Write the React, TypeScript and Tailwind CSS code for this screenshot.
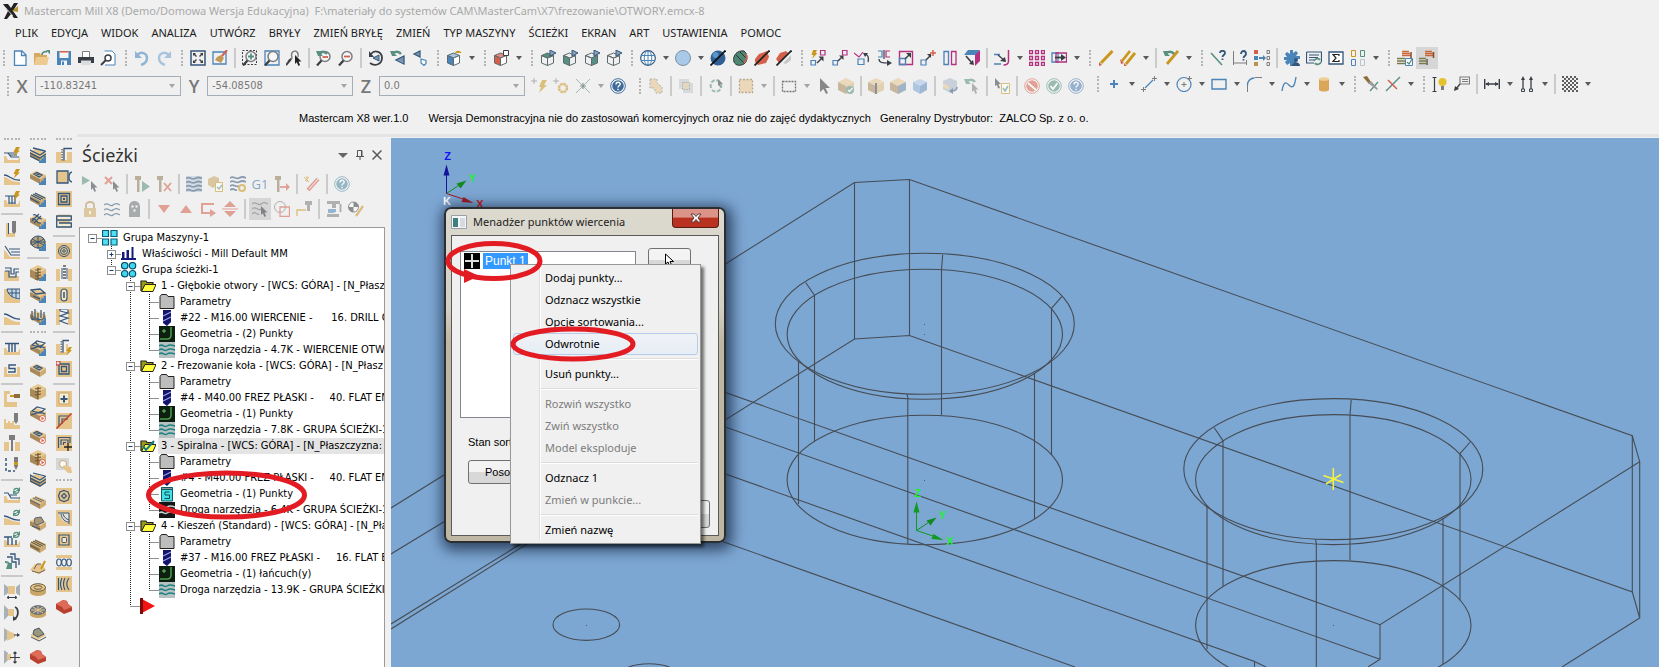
import React from "react";

interface stroke {
  d: string;
  c?: string;
  w?: number;
}

const TAN = "#e6c58d";
const NAVY = "#35567a";
const BLUE = "#4a84b8";
const GREEN = "#579080";
const RED = "#d4604a";
const PINK = "#b5307f";
const DARK = "#3a3f45";
const GRAY = "#7d7d7d";
const GOLD = "#c9971c";

// stroked path
const L = ({ d, c = DARK, w = 1 }: stroke) => (
  <path d={d} fill="none" stroke={c} strokeWidth={w} />
);

// filled path
const F = ({ d, c = DARK }: stroke) => <path d={d} fill={c} />;

/* ---------- shared icon parts ---------- */

const Cube = ({ t = "none", l = "none", r = "none", c = "#5d6a70" }) => (
  <g stroke={c} strokeWidth="1" strokeLinejoin="round">
    <path d="M1.500 5.500L7.500 3l6 2.500-6 2.500z" fill={t} />
    <path d="M1.500 5.500L7.500 8v7.500l-6-2.500z" fill={l} />
    <path d="M13.500 5.500L7.500 8v7.500l6-2.500z" fill={r} />
  </g>
);

const Lens = ({ c = GRAY }) => (
  <>
    <circle cx="9" cy="6.500" r="5" fill="#f4f8fb" stroke={c} strokeWidth="1.500" />
    <L d="M5.500 10.500L1 15.500" w={2.2} />
  </>
);

const Flag = () => (
  <>
    <F d="M10 0l6 3-6 3z" c="#8aa3ba" />
    <L d="M10 0l6 3-6 3z" c={NAVY} />
  </>
);

const BackArrow = () => (
  <>
    <F d="M0 1l6 0-2 2 3 3-5 0z" c={GREEN} />
    <L d="M2 4c3-3 7-3 9 0" c={GREEN} w={2.4} />
  </>
);

const Cursor = ({ x = 0, c = DARK }) => (
  <path
    d="M8 5l6.500 6.500H11.500l1.500 3.500-1.500 1-1.800-3.800L8 14z"
    transform={`translate(${x} 0)`}
    fill={c}
  />
);

const Bolt = () => <F d="M12 0h4l-2 3.500h2L9.500 9.500l2-4.500h-2z" c={GOLD} />;

const Refresh = () => (
  <>
    <L d="M9.500 3.500c1-2.500 4-2.500 5-1M15 4c-1 3-4 3-5 1.500" c={GREEN} w={1.3} />
    <F d="M16 0v4h-4zM9 7.500V4h4z" c={GREEN} />
  </>
);

const Play = () => (
  <>
    <circle cx="12.500" cy="12.500" r="3" fill="#fff" stroke={RED} />
    <F d="M11.500 10.700l3 1.800-3 1.800z" c={RED} />
  </>
);

const Steps = () => <F d="M16 9v7H9v-2.500h2.300v-2h2.400V9z" c={BLUE} />;

const Slab = () => (
  <>
    <F d="M0 5l6-3 10 4-6 4z" c="#e6c891" />
    <F d="M0 5l10 5v5L0 9.500z" c="#a98a5a" />
    <F d="M16 6l-6 4v5l6-4z" c="#cfac72" />
  </>
);

const Box = () => (
  <>
    <F d="M0 4l8-4 8 4-8 4z" c="#e6c891" />
    <F d="M0 4l8 4v8l-8-4z" c="#a98a5a" />
    <F d="M16 4L8 8v8l8-4z" c="#d9b67c" />
  </>
);

const Plate = () => <F d="M0 0h16v16H0z" c={TAN} />;

const Base = () => <F d="M0 9h2l2 4h10l2-4v7H0z" c={TAN} />;

const Help = ({ c = "#3f6c9b" }) => (
  <>
    <circle cx="8" cy="8" r="7.300" fill="#fff" stroke={c} />
    <circle cx="8" cy="8" r="5.800" fill={c} />
    <L d="M6 6.500c0-3 4.200-2.800 4.200-.3 0 1.600-2.200 1.600-2.200 3.300M8 10.800v1.500" c="#fff" w={1.4} />
  </>
);

const Ball = () => <circle cx="8" cy="8" r="7.500" fill="#a9c9e8" stroke="#7b8fa3" />;

/* ---------- icons, all on a 16 x 16 grid ---------- */

const icons: Record<string, React.ReactNode> = {
  new: <><F d="M2.500 .5h8l3.500 4v11H2.500z" c="#fff" /><L d="M2.500 1h7.500l4 4v10.500H2.500zM9.500 1v4.500H14" c={BLUE} w={1.3} /></>,
  open: <><F d="M0 3h6l1 2h6v10H0z" c="#d8a95c" /><F d="M2 7h13l-2 8H0z" c="#ecca90" /><L d="M8 5c0-3 3-4 5-3" c={GREEN} w={1.800} /><F d="M12 0h4v4.500z" c={GREEN} /></>,
  save: <><F d="M1 1h14v14H1z" c={BLUE} /><F d="M3.500 1h9v7h-9zM5 10.500h6V15H5z" c="#f4f4f4" /><F d="M3.500 1h9v1.500h-9z" c={RED} /><F d="M6 11.500h2V15H6z" c={BLUE} /></>,
  print: <><F d="M4 1h8v6H4z" c="#fff" /><L d="M4.500 7V1.500h7V7" c={GRAY} /><F d="M0 7h16v6H0z" /><F d="M3 10.500h10V15H3z" c="#d9dde0" /></>,
  preview: <><F d="M4 1h9l2 2v12H4z" c="#fff" /><L d="M4.500 1H12l3 3v11H5" c={BLUE} /><circle cx="8" cy="8" r="3" fill="#fff" stroke={DARK} strokeWidth="1.500" /><L d="M6 10l-5 5" w={2} /></>,
  undo: <><L d="M3 5c4-4 10-2 10 3 0 4-3 6-6 7" c="#8fb3d4" w={2.400} /><F d="M1 1v7h7z" c="#8fb3d4" /></>,
  redo: <><L d="M13 5C9 1 3 3 3 8c0 4 3 6 6 7" c="#a9c3dc" w={2.400} /><F d="M15 1v7H8z" c="#a9c3dc" /></>,
  fit: <><L d="M1 1h14v14H1z" c={NAVY} w={1.500} /><L d="M3.500 3.500l3 3M12.500 3.500l-3 3M3.500 12.500l3-3M12.500 12.500l-3-3" w={1.400} /><F d="M3 3h3L3 6zM13 3v3l-3-3zM3 13v-3l3 3zM13 13h-3l3-3z" /></>,
  repaint: <><L d="M1 2h13v12H1z" c={BLUE} w={1.300} /><F d="M5 7l4-2 3 3-3 5-6-3z" c="#c39a55" /><L d="M10 6l5-6" c={RED} w={2} /></>,
  zoomTarget: <><path d="M.5.500h14v14H.5z" fill="none" stroke={DARK} strokeDasharray="2 1.500" /><Lens /><L d="M9 3.500v6M6 6.500h6" c={GREEN} w={1.800} /></>,
  zoomWin: <><L d="M1 1h14v14H1z" c={BLUE} w={1.300} /><Lens /></>,
  zoomPtr: <><L d="M2 11L6 8c-3-9 8-9 6-1" c={GRAY} w={1.500} /><L d="M5 9l-5 6" w={2} /><Cursor x={1} c="#222" /></>,
  unzoom: <><Lens /><BackArrow /><L d="M6.500 7h5.500" c={RED} w={1.800} /></>,
  zoomOut: <><Lens /><L d="M6 6.500h6" c={RED} w={1.800} /></>,
  rotate: <><L d="M3 4c4-5 11-2 11 4 0 6-7 9-12 5" w={1.800} /><F d="M1 1v6h5z" /><F d="M11 5v6L5 8z" c="#7895b0" /><L d="M11 5v6L5 8z" c={NAVY} /></>,
  rotUndo: <><BackArrow /><F d="M14 6v7L6 9.500z" c="#7895b0" /><L d="M14 6v8L6 10z" c={NAVY} w={1.300} /></>,
  planes: <><F d="M8 1v6L2 4z" c="#7895b0" /><L d="M8 1v6L2 4z" c={NAVY} w={1.200} /><path d="M9 9l5 1.500v3L12 15.500 9 13z" fill="#fff" stroke={BLUE} strokeWidth="1.200" /></>,
  cubeBlue: <><Cube l={BLUE} t="#a9c6df" r="#fff" /><F d="M9 3c1-3 5-3 6.500 0z" c={GOLD} /></>,
  cubeRed: <><Cube l={RED} t="#e79080" r="#fff" /><path d="M10.500.5h5v5h-5z" fill="#fff" stroke={DARK} /></>,
  cubeTop: <><Cube t={GREEN} /><Flag /></>,
  cubeLeft: <><Cube l={GREEN} /><Flag /></>,
  cubeRight: <><Cube r={GREEN} /><Flag /></>,
  cubeWire: <><Cube /><Flag /></>,
  globe: <><circle cx="8" cy="8" r="7.300" fill="#fff" stroke={NAVY} strokeWidth="1.200" /><L d="M1 5.500h14M1 10.500h14M8 1v14" c={BLUE} /><ellipse cx="8" cy="8" rx="3.800" ry="7" fill="none" stroke={BLUE} /></>,
  sphere: <Ball />,
  sphereSlash: <><circle cx="8" cy="8" r="7.500" fill="#2f5f94" /><circle cx="5.500" cy="5" r="3" fill="#5b94c8" /><L d="M15.500 .5L.5 15.500" c="#111" w={1.800} /></>,
  sphereGreen: <><path d="M2 12C0 5 6 0 12 1c4 3 4 10 0 13-4 2-8 2-10-2z" fill="#4d8773" stroke="#333" /><L d="M4 5l8 8M8 2l6 6" c="#333" /><L d="M12 13c3-3 3-7 2-9" c={RED} w={1.500} /></>,
  redSlash: <><path d="M1 9l4-5 8-3 2 6-3 6-8 2-3-3z" fill={RED} /><L d="M15.500 .5L.5 15.500" c="#222" w={1.800} /></>,
  redSlash2: <><path d="M0 9l4-6 6-2 2 2-9 10z" fill={RED} /><F d="M7 13l8-8v5l-5 4z" c="#c6c9cc" /><L d="M15.500 .5L.5 15.500" c="#222" w={1.800} /></>,
  xfDynamic: <><F d="M3 0h4L5.500 3h2L2 9l1.500-4h-2z" c={GOLD} /><L d="M10.500.5h4.500v4.500h-4.500z" c={PINK} w={1.200} /><L d="M1 10.500h4.500V15H1z" c={BLUE} w={1.200} /><L d="M7 13l5-5" w={1.500} /><F d="M13.500 6.500v5l-5-5z" /></>,
  xfMove: <><L d="M10.500.5h4.500v4.500h-4.500z" c={PINK} w={1.200} /><L d="M1 10.500h4.500V15H1z" c={BLUE} w={1.200} /><L d="M6 11l4-4" w={1.500} /><F d="M11.500 5.500v4.500L7 5.500z" /></>,
  xfRotate: <><L d="M0 3l5 4 4-5" c={PINK} w={1.200} /><L d="M4 14.500V9h6v5.500z" c={BLUE} w={1.200} /><L d="M14 12c1-4 0-7-3-8" w={1.300} /><F d="M9 3h5l-3 4z" /></>,
  xfMirror: <><L d="M2 1h4v6H2" c={BLUE} w={1.200} /><L d="M14 1h-4v6h4" c={PINK} w={1.200} /><L d="M8 0v9M3 9c0 4 4 4 9 4" w={1.200} /><F d="M11 10l5 3-5 3z" /></>,
  xfScale: <><L d="M1.500 1.500h13v13h-13z" c={PINK} w={1.400} /><L d="M1.500 8.500h6v6h-6z" c={BLUE} w={1.400} /><L d="M7 9l5-5" w={1.500} /><F d="M13 3v5L8 3z" /></>,
  xfPlus: <><L d="M1 10h5v5H1z" c={BLUE} w={1.200} /><L d="M6 10l5-5" w={1.500} /><F d="M11 4v4L7 4z" /><L d="M13 0v6M10 3h6" c={RED} w={1.500} /></>,
  xfOffset: <><L d="M2 1.500h4.500v13H2z" c={BLUE} w={1.300} /><L d="M9.500 1.500H14v13H9.500z" c={PINK} w={1.300} /></>,
  xfProject: <><F d="M4 0h12l-4 5H0z" c={BLUE} /><F d="M16 0v11l-5 5V5z" c={PINK} /><L d="M2 6l6 7" w={1.600} /><F d="M10 15l-5-1 4-4z" /></>,
  trimMulti: <><L d="M0 4.500h6M0 14h7" c={BLUE} w={1.300} /><L d="M14.500 0v11c0 3-2 4-5 4" c={PINK} w={1.500} /><L d="M4 5l7 6" w={1.300} /><F d="M12 12l-6-1 5-4z" /></>,
  gridPts: <>{[0, 6, 12].map((x) => [0, 6, 12].map((y) => <path key={`${x}${y}`} d={`M${x + 0.5} ${y + 0.5}h3v3h-3z`} fill="none" stroke={PINK} strokeWidth="1.300" />))}</>,
  stretch: <><L d="M1 3h6v9H1z" c={BLUE} w={1.300} /><L d="M5 3h10.500v9H5z" c={PINK} w={1.300} /><L d="M4 7.500h7" w={1.800} /><F d="M10 4l5 3.500-5 3.500z" /></>,
  pencil: <><L d="M14.500 1L3 13" c={GOLD} w={3} /><F d="M1 12l3 3-3 1z" c={RED} /></>,
  pencils: <><L d="M10 1L2 11M15 3L6 14" c={GOLD} w={2.800} /><F d="M0 9l4 4-3 1zM4 13l3 3-3 0z" c={RED} /></>,
  pencilBack: <><L d="M15 1L4 14" c={GOLD} w={2.800} /><BackArrow /></>,
  askLine: <><L d="M1 3l11 12" c={GREEN} w={1.600} /><L d="M10 3c0-3 5-3 5 0 0 2-2.500 2-2.500 4M12.500 8.500V10" c={NAVY} w={1.800} /></>,
  askDim: <><L d="M1.500 1v14M14.500 10v5M2 13h12" c={GRAY} /><L d="M9 4c0-4 5-4 5 0 0 2-2.500 2-2.500 4M11.500 9v1.500" c={NAVY} w={1.800} /></>,
  attrs: <><F d="M0 0h4v4H0z" c={RED} /><F d="M0 6h4v4H0z" c={BLUE} /><F d="M0 12h4v4H0z" c="#b8954f" /><L d="M5 8h5" c={BLUE} w={2} /><F d="M9 5l3 3-3 3z" c={BLUE} /><L d="M13 .5h2.500v3H13zM13 6.500h2.500v3H13zM13 12.500h2.500v3H13z" c={GRAY} /></>,
  gear: <><path d="M6 0h3v3l3-2 2 2-2 3h4v3h-4v4h-3v3H6v-3l-3 2-2-3 2-2H0V7h3L1 4l2-2 3 2z" fill={BLUE} /><circle cx="12" cy="10" r="2" fill={NAVY} /><F d="M8 16c0-5 8-5 8 0z" c={NAVY} /></>,
  listSync: <><L d="M.5 2h15v10M.5 2v11H8M3 5h10M3 7.500h9M3 10h5" c={NAVY} w={1.200} /><path d="M8 11c1-3 5-3 6-1M15 12c-1 3-5 3-6 1" fill="none" stroke={GREEN} strokeWidth="1.800" /></>,
  sigma: <><path d="M1 2h14v12H1z" fill="#fff" stroke={NAVY} strokeWidth="1.300" /><L d="M11 6V4.500H5L8 8l-3 3.500h6V10" c="#222" w={1.200} /></>,
  tiles: <><L d="M1.500 .5h4v6h-4z" c={GOLD} /><L d="M10.500 .5h4v6h-4z" c={GREEN} /><L d="M1.500 9.500h4v6h-4z" c={BLUE} /><L d="M10.500 9.500h4v6h-4z" c="#bbc5cc" /></>,
  toolCheck: <><path d="M5 1.500h7M5 3.500h8M5 5.500h9" stroke="#c9683a" strokeWidth="1.500" /><path d="M14 2v6" stroke="#8a4a2a" strokeWidth="1.500" /><path d="M0 8.500h8M0 11h8M0 13.500h8" stroke="#7a7c4e" strokeWidth="1.500" /><path d="M8.500 8.500h7v7h-7z" fill="#fff" stroke={BLUE} /><L d="M10 12l2 2 3-5" c={GREEN} w={1.300} /></>,
  toolList: <><path d="M6 1.500h7M6 3.500h8M6 5.500h8" stroke="#c9683a" strokeWidth="1.500" /><path d="M14.500 2v6" stroke="#8a4a2a" strokeWidth="1.500" /><path d="M0 8.500h7M0 11h7M0 13.500h7" stroke="#7a7c4e" strokeWidth="1.500" /><path d="M8 9v6" stroke="#5a5c3e" strokeWidth="1.500" /></>,

  plusBolt: <><L d="M3 0v6M0 3h6" c={GRAY} /><F d="M11 2h5l-3 5h3l-8 8 2-6H8z" c={GOLD} /></>,
  plusGear: <><L d="M3 0v6M0 3h6" c={GRAY} /><circle cx="10" cy="10" r="4" fill="none" stroke={GOLD} strokeWidth="2.500" strokeDasharray="2.500 .6" /></>,
  cross: <><L d="M1 1l14 14M15 1L1 15" c={GREEN} /><L d="M8 5v6M5 8h6" w={1.200} /></>,
  help: <Help />,
  selChain: <path d="M2 1h7v4l5 4v6H8L6 10H2z" fill={TAN} stroke={GRAY} strokeDasharray="2 1.500" />,
  selIn: <><F d="M1 1h10v3H4v7H1zM12 5h3v10H5v-3h7z" c="#c2c9ce" /><path d="M4.500 4.500h7v7h-7z" fill="#d9c49a" stroke={GRAY} strokeDasharray="2 1" /></>,
  selCycle: <><path d="M3 10C1 3 8 0 12 4M13 6c2 6-5 10-9 6" fill="none" stroke={GREEN} strokeWidth="2" strokeDasharray="4 1.500" /><path d="M10 1l5 5h-3l1 3-1 .5L11 7l-1 1z" fill={DARK} /></>,
  selAll: <path d="M1.500 1.500h13v13h-13z" fill={TAN} stroke="#8d6e3a" strokeWidth="1.300" strokeDasharray="2 1.500" />,
  selRect: <path d="M1.500 3.500h13v10h-13z" fill="none" stroke="#111" strokeWidth="1.300" strokeDasharray="2 1" />,
  selArrow: <path d="M4 0l10 10H9.500l2.500 5-2 1-2.500-5L4 14z" fill="#333" />,
  boxCheck: <><Box /><circle cx="12" cy="12" r="4" fill={GREEN} /><L d="M10 12l1.500 1.500L14.500 10" c="#fff" w={1.200} /></>,
  boxEdge: <><Box /><L d="M8 5v11" c="#345" w={2} /></>,
  boxFace: <><Box /><F d="M16 4L8 8v8l8-4z" c="#5f83a6" /></>,
  boxBody: <><F d="M1 4l7-3 7 3-7 4z" c="#a9c6e6" /><F d="M1 4l7 4v8l-7-4z" c="#7ba5d3" /><F d="M15 4L8 8v8l7-4z" c="#5c8cc0" /></>,
  boxBack: <><F d="M1 3l7-3 7 3v8l-7 4-7-4z" c="#a8b8c9" /><F d="M1 5l6 3v4l-6-3z" c={TAN} /><L d="M15 9c0 3-3 4-6 4" c={NAVY} w={1.600} /><F d="M7 13l4-3v6z" c={NAVY} /></>,
  selUndo: <><BackArrow /><Cursor c={GRAY} /></>,
  selVerify: <><path d="M1 0l6 6H4.500L6 10l-2 .5L3 7 1 8z" fill={DARK} /><path d="M7.500 5.500h8v10h-8z" fill="#fff" stroke={GOLD} /><L d="M9 10l2 3 3-5" c={GREEN} w={1.500} /></>,
  stop: <><circle cx="8" cy="8" r="7.300" fill="#fff" stroke={RED} /><circle cx="8" cy="8" r="5.800" fill={RED} /><L d="M4 5l8 7" c="#fff" w={1.800} /></>,
  ok: <><circle cx="8" cy="8" r="7.300" fill="#fff" stroke={GREEN} /><circle cx="8" cy="8" r="5.800" fill={GREEN} /><L d="M4.500 8l2.500 3 4.500-6" c="#fff" w={1.800} /></>,
  helpDim: <Help c="#4f7cb0" />,
  point: <L d="M8 4v8M4 8h8" c={BLUE} w={2} />,
  line: <><L d="M4 12l8-8" c={BLUE} w={1.200} /><L d="M13.500 0v5M11 2.500h5M2.500 11v5M0 13.500h5" c={GRAY} /></>,
  circle: <><circle cx="8" cy="8.500" r="7" fill="none" stroke={BLUE} strokeWidth="1.200" /><L d="M8 6v5M5.500 8.500h5M13.500 0v5M11 2.500h5" c={GRAY} /></>,
  rect: <L d="M1 3.500h14v9.500H1z" c={BLUE} w={1.400} />,
  fillet: <><L d="M1.500 9c0-4 3-7 7-7" c={BLUE} w={1.500} /><L d="M1.500 9v7M9 1.500h7" c={GRAY} /></>,
  spline: <L d="M1 15c2-12 5-8 8-5 4 3 5-3 6-9" c={BLUE} w={1.400} />,
  cylinder: <><F d="M3 3v11c2 2 8 2 10 0V3z" c="#d9a757" /><ellipse cx="8" cy="3" rx="5" ry="1.800" fill="#efcf98" /></>,
  trim: <><L d="M7 15L15 6" c={GREEN} w={1.300} /><F d="M0 1l4-1 4 6-2 2z" c="#8d6e3a" /><F d="M5 7l3-2 7 8-1 1z" c="#9a9a9a" /></>,
  trimX: <><L d="M1 15L15 1" c={GREEN} w={1.400} /><L d="M3 4l9 9" c={RED} w={1.500} /></>,
  bulb: <><L d="M2.500 2v13M.5 1.500h4M.5 15.500h4" c={DARK} w={1.200} /><circle cx="10.500" cy="6" r="4" fill="#e4c22e" /><F d="M9 10h3v4H9z" c={GRAY} /></>,
  note: <><L d="M6 1h9.500v7H6zM8 3.500h6M8 5.500h6" c={GRAY} w={1.200} /><L d="M6 8l-4 5" w={1.300} /><F d="M0 15l1-5 4 3z" /></>,
  dimH: <><L d="M.7 3v10M15.300 3v10M2 8h12" w={1.400} /><F d="M1 8l4-2v4zM15 8l-4-2v4z" /></>,
  dimV: <><L d="M4 2v11M12 2v11" w={1.300} /><F d="M4 0l2 4H2zM12 0l2 4h-4z" /><L d="M2.500 13h3v2.500h-3zM10.500 13h3v2.500h-3z" /></>,
  hatch: <>{[0, 1, 2, 3, 4, 5, 6, 7].map((r) => [0, 1, 2, 3].map((c) => <rect key={`${r}${c}`} x={c * 4 + (r % 2) * 2} y={r * 2} width="2" height="2" fill="#5d5d5d" />))}</>,

  // operations manager
  playSel: <><F d="M0 0l8 4.500L0 9z" c={GREEN} /><Cursor x={1} c={DARK} /></>,
  xSel: <><L d="M1 1l7 7M8 1L1 8" c={RED} w={2} /><Cursor x={1} c={DARK} /></>,
  toolPlay: <><F d="M1 0h6v4H5.500v12H3V4H1z" c="#8d7a55" /><F d="M8 5l8 5.500L8 16z" c={GREEN} /></>,
  toolX: <><F d="M1 0h6v4H5.500v12H3V4H1z" c="#8d7a55" /><L d="M8 7l7 8M15 7l-7 8" c={RED} w={1.800} /></>,
  waves: <><F d="M0 0h16v16H0z" c="#bccbd8" /><L d="M0 2.500c4-3 5 2 9 0s5-1 7 0M0 6.500c4-3 5 2 9 0s5-1 7 0M0 10.500c4-3 5 2 9 0s5-1 7 0M0 14.500c4-3 5 2 9 0s5-1 7 0" c={NAVY} w={1.800} /></>,
  boxVerify: <><F d="M0 3l6-3 5 2v6l-6 4-5-3z" c="#c9a566" /><path d="M7.500 6.500h7v9h-7z" fill="#fff" stroke={GOLD} /><L d="M9 11l2 2 3-4" c={GREEN} w={1.300} /></>,
  waveGear: <><L d="M0 2c4-3 5 2 9 0s5-1 7 0M0 6c4-3 5 2 9 0s5-1 7 0M0 10c4-3 5 2 9 0M0 14c4-3 4 1 7 0" c={NAVY} w={1.800} /><circle cx="12" cy="12" r="3" fill="none" stroke={GOLD} strokeWidth="2" /></>,
  g1: <text x="8" y="12.500" textAnchor="middle" fontSize="13" fontFamily="Open Sans, sans-serif" fill="#2d6ba8">G1</text>,
  toolRight: <><F d="M1 0h6v4H5.500v12H3V4H1z" c="#8d7a55" /><L d="M6 11h7" c={RED} w={1.800} /><F d="M12 7l4 4-4 4z" c={RED} /></>,
  wand: <><L d="M4 14L14 3" c={RED} w={4} /><L d="M5 13l9-10" c="#fff" w={1} /><L d="M0 1l5 5M5 1L1 5M3 0v6" c={GOLD} /></>,
  helpTeal: <Help c="#4d87a0" />,
  lock: <><L d="M4 8V4c0-4 8-4 8 0v4" c="#b59350" w={1.800} /><F d="M2 7h12v9H2z" c="#cfa862" /><L d="M8 10v3" c="#fff" w={1.800} /></>,
  wavesOnly: <L d="M0 4c4-4 6 3 9 0s5-1 7 0M0 9c4-4 6 3 9 0s5-1 7 0M0 14c4-4 6 3 9 0s5-1 7 0" c={NAVY} w={1.200} />,
  ghost: <><F d="M3 16V6c0-8 11-8 11 0v10z" c="#6f7478" /><L d="M5.500 5.500h2M9.500 5.500h2M7.500 9.500h2" c="#fff" w={2} /></>,
  down: <F d="M2 4h12l-6 8z" c={RED} />,
  up: <F d="M2 12h12L8 4z" c={RED} />,
  insert: <><L d="M14 3H2v9h9" c={RED} w={2} /><F d="M10 8l6 4-6 4z" c={RED} /></>,
  updown: <><F d="M2 6h12L8 0zM2 10h12l-6 6z" c={RED} /><L d="M0 8h16" c={RED} /></>,
  waveSel: <><L d="M0 3c4-4 6 3 9 0s5-1 7 0M0 8c4-4 6 3 9 0M0 13c4-4 5 2 7 0" c={GRAY} w={1.200} /><Cursor x={1} c={DARK} /></>,
  shapes: <><circle cx="6" cy="6" r="5.500" fill="none" stroke={GRAY} /><L d="M6 6h9.500v9.500H6z" c={RED} w={1.300} /></>,
  toolPath: <><L d="M1 15V9h9" c={GOLD} w={1.300} /><F d="M9 0h7v4h-2v6h-3V4H9z" c={GRAY} /></>,
  machine: <><F d="M1 0h13v3h-4v4H6V3H1zM1 13h12v3H1z" c={GRAY} /><F d="M2 8h8v3l-3 1H2z" c={BLUE} /><L d="M14.500 3v8" c={GRAY} w={2} /></>,
  edit: <><circle cx="5.500" cy="6" r="5" fill="#fff" stroke={DARK} /><F d="M5.500 1v5h5c0-3-2-5-5-5zM5.500 11V6h-5c0 3 2 5 5 5z" /><L d="M15 5L8 15" c={GOLD} w={2.200} /></>,

  // left bars, first column
  a1: <><Base /><L d="M0 6h4l3 4h8M4 6h9M6 8h7" c={NAVY} w={1.200} /><Bolt /></>,
  a2: <><F d="M0 8c4 0 6 5 16 5v3H0z" c={TAN} /><L d="M0 6c6 0 7 6 16 5" c={NAVY} w={1.300} /><Bolt /></>,
  a3: <><Base /><L d="M1 5h12M5 5v8M8 5v8M11 5v8M5 12h6" c={NAVY} w={1.200} /><Bolt /></>,
  a4: <><F d="M0 2h5v10h6v4H2V2z" c={TAN} /><L d="M4.500 2v11" c={NAVY} /><F d="M8 0h4v11l-2 2-2-2z" c={GRAY} /></>,
  a5: <><F d="M0 6l6 8h10v2H0z" c={TAN} /><L d="M1 3l6 9h9M5 6h11M7 9h9" c={NAVY} w={1.200} /></>,
  a6: <><F d="M0 6h6v5h9v5H0z" c={TAN} /><L d="M1 3h6v6h3V4h5M1 6h4v6h7V7h3" c={NAVY} w={1.200} /></>,
  a7: <><F d="M0 2h4c2 8 6 10 12 11v3H0z" c={TAN} /><path d="M3 2h13v10C8 11 4 8 3 2z" fill="#c6d5e3" stroke={NAVY} /><L d="M4 6h12M8 2v8M12 2v9" c={NAVY} /></>,
  a8: <><F d="M0 8c5 0 7 5 16 5v3H0z" c={TAN} /><L d="M0 5c6 0 8 6 16 5" c={NAVY} w={1.300} /></>,
  a9: <><Base /><L d="M1 4.500h14M5 5v8M8 5v8M11 5v8" c={NAVY} w={1.400} /></>,
  a10: <><F d="M0 6h3v7h10V6h3v10H0z" c={TAN} /><L d="M12 4H5v3.500h6V11H4" c={NAVY} w={1.400} /></>,
  a11: <><F d="M0 0h6v3H3v8h10v5H0z" c={TAN} /><L d="M6 5h5" c={GOLD} w={2} /><F d="M10 3h6v4h-6z" c="#8d6e3a" /></>,
  a12: <><F d="M0 6h2v4h2V8h2v2h2V8h2v4h6v4H0z" c={TAN} /><F d="M10 0h4v8l-2 3-2-3z" c={GRAY} /></>,
  a13: <><F d="M0 7h5v9H0zM11 7h5v9h-5z" c={TAN} /><F d="M5 0h6v5H9v11H7V5H5z" c={GRAY} /></>,
  a14: <><path d="M2 1v13h9" fill="none" stroke={NAVY} strokeWidth="1.500" strokeDasharray="3 2" /><F d="M10 0h4v9l-2 4-2-4z" c={GRAY} /><F d="M10 5h4v3h-4z" c={GOLD} /></>,
  a15: <><Base /><L d="M0 6h4l3 5h9M5 8h8" c={NAVY} w={1.200} /><Refresh /></>,
  a16: <><F d="M0 9c5 0 7 4 16 4v3H0z" c={TAN} /><L d="M0 7c6 0 7 5 16 4" c={NAVY} w={1.300} /><Refresh /></>,
  a17: <><Base /><L d="M0 6h8M4 6v8M8 7v7M12 9v5" c={NAVY} w={1.400} /><Refresh /></>,
  a18: <><L d="M6 1h5v5h4v6M3 4h5v5h4v6" c={NAVY} w={1.300} /><L d="M1 9c2 0 5 1 5 4" c={GREEN} w={2} /><F d="M4 10h4v6H2z" c={GREEN} /></>,
  a19: <><F d="M0 1l4 3v6l-4 3z" c="#a8b0b8" /><F d="M16 1l-4 3v6l4 3z" c="#a8b0b8" /><F d="M4 3h7v8H4z" c={TAN} /><L d="M3 14.500h10M5 13l-2 1.500L5 16M11 13l2 1.500L11 16" /></>,
  a20: <><F d="M0 0l4 4v7l-4 4z" c="#a8b0b8" /><F d="M4 4h6v7H4z" c={TAN} /><L d="M11 2c4 2 4 10-1 12" w={1.800} /><F d="M9 16v-5l4 3z" /></>,
  a21: <><F d="M0 1l4 3v7l-4 4z" c="#a8b0b8" /><F d="M3 3l8 4v3l-8 4z" c={TAN} /><L d="M10 8h4" /><F d="M13 6l3 2-3 2z" /></>,
  a22: <><F d="M0 1l4 3v7l-4 4z" c="#a8b0b8" /><F d="M3 5h4v6H3z" c={TAN} /><L d="M11 3v11M6 8.500h10M9.500 4.500L11 3l1.500 1.500M9.500 12.500L11 14l1.500-1.500" w={1.200} /></>,

  // second column
  b1: <><Slab /><L d="M0 3l10 5 6-4M0 6l10 5 6-4M0 9l9 4.500M3 1l12 3" c={NAVY} w={1.300} /><Steps /></>,
  b2: <><Slab /><L d="M4 5l3-1.500L12 6 9 8zM6.500 5l3 1" c={NAVY} w={1.300} /><Steps /></>,
  b3: <><Slab /><L d="M1 4l10 5M3 3l10 5M5 2l10 5M0 7l9 5" c={NAVY} w={1.200} /><Steps /></>,
  b4: <><Slab /><L d="M3 2c4-2 4 4 9 4M2 6c4-2 4 5 9 4M9 1L2 8M11 3l-7 7" c={NAVY} w={1.200} /><Steps /></>,
  b5: <><Slab /><ellipse cx="8" cy="7" rx="7" ry="6" fill="#b9a276" stroke={NAVY} /><L d="M8 1v12M2 4l12 6M14 4L2 10M1 7h14" c={NAVY} /><Steps /></>,
  b6: <><Box /><L d="M8 3v12M5 5l6-1M5 8l6-1M5 11l6-1M5 14l6-1" c="#6b5430" w={1.200} /><Steps /></>,
  b7: <><Slab /><L d="M1 3l9-1 5 4-9 1zM3 9l7 3" c={NAVY} w={1.300} /><Steps /></>,
  b8: <><Slab /><L d="M2 2v9M5 0v9M8 4v8M11 1v8M14 3v7M2 11c4-4 8 3 12-2" c={NAVY} w={1.200} /><Steps /></>,
  b9: <><Slab /><L d="M2 5l5-4 8 2-5 4zM1 9l9-3 5 2M5 2l6 6" c={NAVY} w={1.200} /><Steps /></>,
  b10: <><Slab /><L d="M4 5l3-1.500L12 6 9 8zM6.500 5l3 1" c={NAVY} w={1.300} /></>,
  b11: <><Box /><L d="M8 3v12M5 5l6-1M5 8l6-1M5 11l6-1" c="#6b5430" w={1.200} /></>,
  b12: <><Slab /><L d="M2 5l5-4 8 2-5 4zM1 9l9-3 5 2" c={NAVY} w={1.200} /><Play /></>,
  b13: <><Slab /><L d="M4 5l3-1.500L12 6 9 8zM6.500 5l3 1" c={NAVY} w={1.300} /><Play /></>,
  b14: <><Box /><L d="M8 3v12M5 5l6-1M5 8l6-1M5 11l6-1" c="#6b5430" w={1.200} /><Play /></>,
  b15: <><Slab /><L d="M0 3l10 5 6-4M0 6l10 5 6-4M0 9l10 5 6-4M0 2v8M3 1l12 3" c={NAVY} w={1.200} /></>,
  b16: <><Slab /><L d="M3 4l9 4M5 3l9 4M0 6l10 5" c="#5c6670" /></>,
  b17: <><Slab /><path d="M5 2l6-1 3 5-7 3-3-2z" fill="#a89674" stroke="#5c6670" /><L d="M2 10l8 3" c={NAVY} /></>,
  b18: <><Slab /><L d="M1 4l10 5M3 3l10 5M5 2l10 5M0 7l9 5" c="#6b5d40" w={1.200} /></>,
  b19: <><F d="M0 10l5-6h7l4 6-7 4z" c={TAN} /><L d="M4 9l3-5h4M2 11l7 2 6-3" c="#6d6250" /><L d="M15 1L11 9" c={GOLD} w={2} /></>,
  b20: <><F d="M0 5v6c2 4 14 4 16 0V5z" c="#c9a566" /><ellipse cx="8" cy="5.500" rx="7.500" ry="3.800" fill={TAN} stroke="#6b5d40" /><ellipse cx="8" cy="5.500" rx="4" ry="1.800" fill="none" stroke="#6b5d40" /></>,
  b21: <><F d="M0 5v6c2 4 14 4 16 0V5z" c="#c9a566" /><ellipse cx="8" cy="6" rx="7.500" ry="4.300" fill="#6f7c88" stroke="#5c6670" /><L d="M8 2v8M1 6h14M3 3l10 6M13 3L3 9" c={TAN} /></>,
  b22: <><F d="M0 9l8-4 8 4-8 5z" c={TAN} /><path d="M4 4l5-2 5 6-6 3-5-3z" fill="#9c9680" stroke="#48545e" /><L d="M1 11l8 4 7-4" c="#48545e" /></>,
  b23: <><F d="M0 6l7-4 4 1 1 3 4 3v4l-8 3-8-5z" c="#b8402f" /><F d="M0 6l7-4 4 1 1 3 4 3-8 3-2-3z" c="#dd6b57" /></>,

  // third column
  c1: <><F d="M0 5h5v8h6V5h5v11H0z" c={TAN} /><L d="M16 1.500H8v12" c={NAVY} w={1.300} /><path d="M6.500 2v12" stroke={GRAY} strokeWidth="2.500" strokeDasharray="1.500 1" /></>,
  c2: <><path d="M1 2h11v12H1z" fill={TAN} stroke={NAVY} strokeWidth="1.300" /><L d="M16 3c-4 1-4 9 0 10" c={NAVY} w={1.300} /></>,
  c3: <><Plate /><path d="M2.500 2.500h11v11h-11zM5 5h6v6H5z" fill="none" stroke={NAVY} strokeWidth="1.300" /><L d="M7 8h2" c={NAVY} w={2} /></>,
  c4: <><path d="M2 1.500h12v13H2z" fill={TAN} /><path d="M.700 3h14.600v4H.7zM3 10h12.300v4H.7V7" fill="#f5ead3" stroke={NAVY} strokeWidth="1.300" /></>,
  c5: <><Plate /><circle cx="8" cy="8" r="5.500" fill="none" stroke={NAVY} /><circle cx="8" cy="8" r="3.500" fill="none" stroke={NAVY} /><circle cx="8" cy="8" r="1.300" fill="none" stroke={NAVY} /></>,
  c6: <><F d="M0 4h4v12H0zM12 4h4v12h-4z" c={TAN} /><path d="M8.500 0v15" stroke={GRAY} strokeWidth="3" strokeDasharray="2 1" /><L d="M6 3v11M11 3v11" c={NAVY} /></>,
  c7: <><Plate /><rect x="5" y="2" width="6" height="12" rx="3" fill="#f2e3c4" stroke={NAVY} strokeWidth="1.200" /><L d="M8 5v6" c={NAVY} w={1.500} /></>,
  c8: <><F d="M0 0h4v16H0zM12 0h4v16h-4z" c={TAN} /><L d="M4 2l8 2-8 3 8 2-8 3 8 3M4 2V0h8M12 4v-3" c={NAVY} w={1.200} /></>,
  c9: <><F d="M0 5h4v8h6V5h2v11H0z" c={TAN} /><L d="M13 1.500H7v12" c={NAVY} w={1.300} /><path d="M5.500 2v12" stroke={GRAY} strokeWidth="2" strokeDasharray="1.500 1" /><F d="M13 8h3l-2 3h2l-5 5 1-4h-2z" c={GOLD} /></>,
  c10: <><Plate /><path d="M3 3h10v10H3zM5.500 5.500h5v5h-5z" fill="none" stroke={NAVY} strokeWidth="1.300" /><path d="M0 0h4v4H0z" fill="#f4d8d0" stroke="#a33" /></>,
  c11: <><Plate /><path d="M3 2h10v11H3z" fill="#f5ead3" stroke="#c9a566" /><L d="M8 4.500v7M4.500 8h7" c={NAVY} w={2} /></>,
  c12: <><Plate /><path d="M3 13V3h10M6 11V6h6" fill="none" stroke={NAVY} strokeWidth="1.200" /><L d="M15.500 .5L.5 15.500" c="#c04030" w={1.500} /></>,
  c13: <><Plate /><L d="M2.500 13V2.500H14V8M5 10V5h7v3M7.500 10V7.500H10" c={NAVY} w={1.200} /><L d="M12 8v8M8 12h8" c="#222" w={1.300} /></>,
  c14: <><F d="M0 1h13v12H0z" c="#d3d6d6" /><circle cx="7" cy="7" r="3.500" fill="#fff" stroke="#c9a566" /><F d="M7 8l8 2 1 6h-4l-4-4z" c={TAN} /></>,
  c15: <><Plate /><L d="M8 2.500l4 1.500 1.500 4-1.500 4-4 1.500L4 12 2.500 8 4 4zM8 5.500l2.500 2.500L8 10.500 5.500 8z" c={NAVY} w={1.200} /></>,
  c16: <><Plate /><path d="M3 3h10v10C7 12 4 8 3 3z" fill="#e4e2d4" /><L d="M2 3h11v11M5 4c1 5 4 8 8 8M7 4c1 3 3 5 6 6" c={NAVY} /></>,
  c17: <><Plate /><path d="M3 3h10v10H3z" fill="none" stroke={NAVY} strokeWidth="1.200" /><rect x="6" y="5.500" width="4.500" height="5" rx="1" fill="#f5ead3" stroke={NAVY} /></>,
  c18: <><F d="M0 1h16v3H0zM0 13h16v3H0z" c={TAN} /><ellipse cx="3" cy="8.500" rx="2.300" ry="3.500" fill="none" stroke={NAVY} strokeWidth="1.200" /><ellipse cx="8" cy="8.500" rx="2.300" ry="3.500" fill="none" stroke={NAVY} strokeWidth="1.200" /><ellipse cx="13" cy="8.500" rx="2.300" ry="3.500" fill="none" stroke={NAVY} strokeWidth="1.200" /></>,
  c19: <><Plate /><L d="M2.500 2v12M6 2c-2 4-2 8 0 12M9 2c-2 4-2 8 0 12M13 2c-3 4-3 8 0 12" c={NAVY} w={1.200} /></>,

  // tree
  machines: <><path d="M.5.500h6v6h-6zM9 .5h6v6H9zM.5 9h6v6h-6zM9 9h6v6H9z" fill="#4fe0f5" stroke="#0a5d78" strokeWidth="1.200" /></>,
  props: <><F d="M1 6h2.500v6H1zM5.500 4H8v8H5.500zM10.500 1h2v11h-2z" c="#1a1a7c" /><L d="M0 13h15" c="#1a1a7c" w={2} /></>,
  circles: <><g fill="#3fd8f0" stroke="#0a4d68" strokeWidth="1.200"><circle cx="3.700" cy="3.700" r="3.200" /><circle cx="11.500" cy="3.700" r="3.200" /><circle cx="3.700" cy="11.700" r="3.200" /><circle cx="11.500" cy="11.700" r="3.200" /></g></>,
  folder: <><path d="M1 13V3h5l1 1.500h6V7" fill="#9a9a18" stroke="#222" strokeWidth="1.200" /><path d="M1.500 13.500L5 6.500h11l-3 7z" fill="#ffff3c" stroke="#222" /></>,
  folderCheck: <><path d="M1 13V3h5l1 1.500h6V7" fill="#9a9a18" stroke="#222" strokeWidth="1.200" /><path d="M1.500 13.500L5 6.500h11l-3 7z" fill="#ffff3c" stroke="#222" /><L d="M3 8l3 4 8-9" c="#127a8a" w={2} /></>,
  params: <path d="M1 14.500V2.500l1.500-2h5l1.500 2h6v12z" fill="#bdbdbd" stroke="#222" />,
  drill: <><F d="M4 0h8v12l-4 4-4-3z" c="#14146e" /><L d="M4 6l8-4M4 11l8-4" c="#9aa4e0" w={1.200} /></>,
  geometry: <><F d="M0 0h16v16H0z" c="#0d200f" /><L d="M12 1v8c0 3-2 4-4 4H1" c="#4f9a52" w={1.500} /><L d="M5 3v4M3 5h4" c="#6ac06c" /></>,
  toolpath: <><F d="M0 0h16v16H0z" c="#b7c2c2" /><L d="M0 4c4-3 5 2 8 0s5-1 8 0M0 8c4-3 5 2 8 0s5-1 8 0M0 12c4-3 5 2 8 0s5-1 8 0" c="#1f8080" w={1.500} /></>,
  toolpathOn: <><F d="M0 0h16v16H0z" c="#151515" /><L d="M0 5c4-3 5 2 8 0s5-1 8 0M0 11c4-3 5 2 8 0s5-1 8 0" c="#c8d4d4" w={1.500} /></>,
  solid: <><path d="M2.500 3h11v12h-11z" fill="#45e0e6" stroke="#0c5a60" /><path d="M2.500 1.500h11v2h-11z" fill="#8d9a9a" stroke="#0c5a60" /><path d="M10.500 6H6v3h4.500v3.500H5.500" fill="none" stroke="#0a4a50" /></>,
  arrow: <><F d="M0 0l15 8-15 8z" c="#f01414" /><F d="M0 0h3v16H0z" c="#7e0a0a" /></>,
  listArrow: <F d="M0 0l15 7L0 14z" c="#e31b23" />,
};

const dimmed = new Set([
  "plusBolt", "plusGear", "cross", "selChain", "selIn", "selCycle", "selAll", "selRect", "selArrow", "boxCheck",
  "boxEdge", "boxFace", "boxBody", "boxBack", "selUndo", "selVerify", "stop", "ok", "helpDim", "playSel", "xSel",
  "toolPlay", "toolX", "waves", "boxVerify", "waveGear", "g1", "toolRight", "wand", "helpTeal", "lock", "wavesOnly",
  "ghost", "down", "up", "insert", "updown", "waveSel", "shapes", "toolPath", "machine", "edit",
]);

const pressed = new Set(["toolList", "waveSel"]);

const Icon = ({ name }: { name: string }) => (
  <svg viewBox="0 0 16 16" className={`size-4 shrink-0 ${dimmed.has(name) ? "opacity-55" : ""}`} aria-hidden="true">
    {icons[name]}
  </svg>
);

const Caret = ({ faded = false }) => (
  <svg viewBox="0 0 8 4" className={`h-1 w-2 shrink-0 ${faded ? "opacity-50" : ""}`} aria-hidden="true">
    <path d="M1 0h6L4 4z" fill="#5a5a5a" />
  </svg>
);

interface bar {
  items: string;
  vertical?: boolean;
}

// "|" is a separator, "v" a drop-down arrow, ":" a grip, anything else an icon
const Bar = ({ items, vertical }: bar) => (
  <div role="toolbar" className={vertical ? "flex flex-col items-center" : "flex items-center"}>
    {items.split(" ").map((item, i, all) => {
      if (item === "|")
        return vertical ? (
          <div key={i} className="my-[3px] h-0.5 w-[22px] shrink-0 bg-[#c9c9c9]" />
        ) : (
          <div key={i} className="mx-[3px] h-5 w-0.5 shrink-0 bg-[#cbcbcb]" />
        );
      if (item === ":")
        return vertical ? (
          <div key={i} className="my-[3px] h-[3px] w-4 shrink-0 border-t-2 border-dotted border-[#b5b5b5]" />
        ) : (
          <div key={i} className="mr-1 ml-[3px] h-4 w-0.5 shrink-0 border-l-2 border-dotted border-[#b5b5b5]" />
        );
      if (item === "v")
        return (
          <button key={i} aria-label={`${all[i - 1]} menu`} className="flex h-[22px] w-[13px] shrink-0 items-center justify-center">
            <Caret faded={dimmed.has(all[i - 1])} />
          </button>
        );
      return (
        <button
          key={i}
          aria-label={item}
          className={`flex size-[22px] shrink-0 items-center justify-center ${pressed.has(item) ? "bg-[#d6d6d6]" : ""}`}
        >
          <Icon name={item} />
        </button>
      );
    })}
  </div>
);

const mainBars = [
  ": new open save print preview",
  ": undo redo",
  ": fit repaint | zoomTarget zoomWin zoomPtr | unzoom zoomOut | rotate rotUndo planes",
  ": cubeBlue v",
  ": cubeRed v",
  ": cubeTop cubeLeft cubeRight cubeWire",
  ": globe v sphere v sphereSlash sphereGreen redSlash redSlash2",
  ": xfDynamic xfMove xfRotate xfMirror xfScale xfPlus xfOffset xfProject | trimMulti v gridPts stretch v",
  ": pencil pencils v | pencilBack v",
  ": askLine askDim attrs | gear listSync sigma tiles v",
  ": toolCheck toolList",
];

const sketchBars = [
  ": point v line v circle v rect v fillet v spline v cylinder v",
  ": trim trimX v",
  ": bulb note | dimH v dimV v | hatch v",
];

const menus = [
  "PLIK", "EDYCJA", "WIDOK", "ANALIZA", "UTWÓRZ", "BRYŁY", "ZMIEŃ BRYŁĘ", "ZMIEŃ",
  "TYP MASZYNY", "ŚCIEŻKI", "EKRAN", "ART", "USTAWIENIA", "POMOC",
];

const Coordinate = ({ label, value }: { label: string; value: string }) => (
  <div className="flex items-center">
    <label htmlFor={label} className="w-[26px] text-center font-['Open_Sans',sans-serif] text-lg leading-5 font-semibold text-[#777]">
      {label}
    </label>
    <div className="flex h-5 w-[146px] items-center border border-[#a5adb8] pr-1">
      <input
        id={label}
        defaultValue={value}
        className="w-full min-w-0 bg-transparent px-1 font-['DejaVu_Sans_Condensed','Noto_Sans',sans-serif] text-[11px] text-[#787878] outline-none"
      />
      <Caret faded />
    </div>
  </div>
);

const Header = () => (
  <header className="shrink-0">
    <div className="flex h-[22px] items-center gap-[5px] px-[3px] text-[11px] whitespace-pre text-[#a9a9a9]">
      <svg viewBox="0 0 16 16" className="size-4" aria-hidden="true">
        <path d="M0 1h5l3 4 3-5h4l-5 8 5 7h-4l-3-4-4 5H1l4-8z" fill="#222" />
        <path d="M9 8l6-5v6z" fill="#b8932f" />
        <path d="M1 3l9 10" stroke="#ccc" />
      </svg>
      <h1>{"Mastercam Mill X8 (Demo/Domowa Wersja Edukacyjna)  F:\\materiały do systemów CAM\\MasterCam\\X7\\frezowanie\\OTWORY.emcx-8"}</h1>
    </div>
    <nav className="flex h-[22px] items-center gap-[13px] px-[15px] text-[11px] text-[#1c1c1c]">
      {menus.map((menu) => (
        <button key={menu} className="whitespace-nowrap">{menu}</button>
      ))}
    </nav>
    <div className="flex h-7 items-center gap-[3px]">
      {mainBars.map((items) => (
        <Bar key={items} items={items} />
      ))}
    </div>
    <div className="flex h-7 items-center">
      <div className="ml-[7px] h-5 w-0.5 border-l-2 border-dotted border-[#b5b5b5]" />
      <Coordinate label="X" value="-110.83241" />
      <Coordinate label="Y" value="-54.08508" />
      <Coordinate label="Z" value="0.0" />
      <div className="flex h-7 items-center gap-[7px] pl-[3px]">
        <Bar items="plusBolt plusGear cross v help" />
        <Bar items=": selChain | selIn | selCycle | selAll v | selRect v selArrow boxCheck | boxEdge boxFace boxBody | boxBack selUndo | selVerify | stop ok helpDim" />
        <div className="flex h-6 items-center gap-[3px] self-start">
          {sketchBars.map((items) => (
            <Bar key={items} items={items} />
          ))}
        </div>
      </div>
    </div>
    <p className="flex h-[34px] items-center gap-5 pt-0.5 pl-[299px] font-['Liberation_Sans',sans-serif] text-[11px] whitespace-pre text-black">
      <span>Mastercam X8 wer.1.0</span>
      <span>{"Wersja Demonstracyjna nie do zastosowań komercyjnych oraz nie do zajęć dydaktycznych   Generalny Dystrybutor:  ZALCO Sp. z o. o."}</span>
    </p>
  </header>
);

/* ---------- operations tree ---------- */

interface node {
  cells: string;
  icon: string;
  text?: string;
  active?: boolean;
}

const operation = (title: string, tool: string, geometry: string, path: string, active = false): node[] => [
  { cells: "  m", icon: active ? "folderCheck" : "folder", text: title, active },
  { cells: "  it", icon: "params", text: "Parametry" },
  { cells: "  it", icon: "drill", text: tool },
  { cells: "  it", icon: active ? "solid" : "geometry", text: geometry },
  { cells: "  il", icon: active ? "toolpathOn" : "toolpath", text: path },
];

const nodes: node[] = [
  { cells: "r", icon: "machines", text: "Grupa Maszyny-1" },
  { cells: " p", icon: "props", text: "Właściwości - Mill Default MM" },
  { cells: " e", icon: "circles", text: "Grupa ścieżki-1" },
  ...operation("1 - Głębokie otwory - [WCS: GÓRA] - [N_Płasz", "#22 - M16.00 WIERCENIE -      16. DRILL C", "Geometria - (2) Punkty", "Droga narzędzia - 4.7K - WIERCENIE OTW"),
  ...operation("2 - Frezowanie koła - [WCS: GÓRA] - [N_Płasz", "#4 - M40.00 FREZ PŁASKI -     40. FLAT EN", "Geometria - (1) Punkty", "Droga narzędzia - 7.8K - GRUPA ŚCIEŻKI-1"),
  ...operation("3 - Spiralna - [WCS: GÓRA] - [N_Płaszczyzna:", "#4 - M40.00 FREZ PŁASKI -     40. FLAT EN", "Geometria - (1) Punkty", "Droga narzędzia - 6.4K - GRUPA ŚCIEŻKI-1", true),
  ...operation("4 - Kieszeń (Standard) - [WCS: GÓRA] - [N_Pła", "#37 - M16.00 FREZ PŁASKI -     16. FLAT E", "Geometria - (1) łańcuch(y)", "Droga narzędzia - 13.9K - GRUPA ŚCIEŻKI"),
  { cells: "  l", icon: "arrow" },
];

const guides: Record<string, string> = {
  " ": "",
  r: "M9.500 8.500H19",
  p: "M9.500 0v16M9.500 8.500H19",
  e: "M9.500 0v8M9.500 8.500H19",
  m: "M9.500 0v16M9.500 8.500H19",
  i: "M9.500 0v16",
  t: "M9.500 0v16M9.500 8.500H19",
  l: "M9.500 0v8M9.500 8.500H19",
};

const Guide = ({ kind }: { kind: string }) => (
  <svg viewBox="0 0 19 16" className="h-4 w-[19px] shrink-0" aria-hidden="true">
    <path d={guides[kind]} fill="none" stroke="#222" strokeDasharray="1 1" />
    {"rpem".includes(kind) && (
      <>
        <rect x="5.500" y="4.500" width="8" height="8" fill="#fff" stroke="#8c8c8c" />
        <path d={kind === "p" ? "M7.500 8.500h4M9.500 6.500v4" : "M7.500 8.500h4"} stroke="#1f3a7a" />
      </>
    )}
  </svg>
);

const Tree = () => (
  <ul
    role="tree"
    className="mr-1.5 ml-0.5 grow overflow-hidden border border-b-0 border-[#9a9a9a] bg-white pt-0.5 pl-[3px] font-['DejaVu_Sans_Condensed','Noto_Sans',sans-serif] text-[11px] leading-4 text-black"
  >
    {nodes.map((node, i) => (
      <li key={i} role="treeitem" className="flex h-4 items-center whitespace-pre">
        {node.cells.split("").map((kind, k) => (
          <Guide key={k} kind={kind} />
        ))}
        <Icon name={node.icon} />
        <span className={`ml-0.5 grow pl-[3px] ${node.active ? "bg-[#e4e4e4]" : ""}`}>{node.text}</span>
      </li>
    ))}
  </ul>
);

const Operations = () => (
  <section className="flex w-[314px] shrink-0 flex-col">
    <div className="flex h-9 items-center pr-[9px] pl-[5px]">
      <h2 className="grow text-lg text-[#333]">Ścieżki</h2>
      <div className="flex items-center gap-2 text-[#555]">
        <button aria-label="Menu">
          <svg viewBox="0 0 10 5" className="h-[5px] w-2.5"><path d="M0 0h10L5 5z" fill="#666" /></svg>
        </button>
        <button aria-label="Przypnij">
          <svg viewBox="0 0 8 10" className="h-2.5 w-2"><path d="M1.500 6V.500h4.500V6M0 6.500h8M4 7v3M5.500 1v5" fill="none" stroke="#555" /></svg>
        </button>
        <button aria-label="Zamknij">
          <svg viewBox="0 0 9 9" className="size-2.5"><path d="M.5.500l8 8M8.500.500l-8 8" stroke="#555" strokeWidth="1.300" /></svg>
        </button>
      </div>
    </div>
    <div className="flex flex-col gap-[3px] pb-[7px] pl-0.5">
      <Bar items="playSel xSel | toolPlay toolX | waves boxVerify waveGear g1 toolRight | wand | helpTeal" />
      <Bar items="lock wavesOnly ghost | down up insert updown | waveSel shapes toolPath | machine edit" />
    </div>
    <Tree />
  </section>
);

/* ---------- graphics view ---------- */

// one countersunk hole: chamfer ring, bore and floor
const Hole = ({ x = 0, y = 0 }) => (
  <g transform={`translate(${x} ${y})`}>
    <ellipse cx="924.800" cy="323.800" rx="149.500" ry="70.500" />
    <ellipse cx="924.800" cy="334.300" rx="137.700" ry="65" />
    <ellipse cx="924.800" cy="480" rx="137.700" ry="64.700" />
    <path d="M798.500 361v143M814.500 295v146M907.800 398v146M941.500 270v145M1034.500 373v146M1051.500 308v147" />
    <path d="M805.700 282.500l8.800 12.800M942.700 254.500l-1.200 15M1061.700 296.700l-10.200 11.600M907 394l1 5" />
  </g>
);

const Axes = ({ x, y, colors, labels }: { x: number; y: number; colors: string[]; labels: string[] }) => (
  <g transform={`translate(${x} ${y})`} fontFamily="Liberation Sans, sans-serif" fontSize="11" fontWeight="bold" textAnchor="middle">
    <path d="M0 0v-20" stroke={colors[0]} />
    <path d="M0-29l3 11h-6z" fill={colors[0]} />
    <path d="M0 0l12-8" stroke={colors[1]} />
    <path d="M20-13l-6 8-4-5z" fill={colors[1]} />
    <path d="M0 0l18 6" stroke={colors[2]} />
    <path d="M27 9.500l-12-1 2-5z" fill={colors[2]} />
    <text x="1" y="-34" fill={labels[0]}>Z</text>
    <text x="26" y="-12" fill={labels[1]}>Y</text>
    <text x="33.500" y="14" fill={labels[2]}>X</text>
  </g>
);

const Wireframe = () => (
  <svg viewBox="391 138 1268 529" preserveAspectRatio="xMinYMin slice" className="absolute inset-0 size-full" aria-hidden="true">
    <g fill="none" stroke="#454c54" strokeWidth="1.100">
      <path d="M700 280L854.500 182.500 909.500 179.500 1632.300 435.700 1639.700 461.700 1380 624.700 700 383.500" />
      <path d="M391 629L854.500 339 909.500 335.500 1632.300 592 1639.700 618 1562 667" />
      <path d="M854.500 182.500V339M909.500 179.500V335.500M1632.300 435.700V592M1639.700 461.700V618M1380 624.700V659.300L1368 667" />
      <path d="M700 418L1380 659.300M700 465L1254.500 661.500V667M1254.500 661.500L1266 667M700 533.500L1075 667" />
      <path d="M391 508L460 465M391 554L460 512M391 624L540 532" />
      <ellipse cx="586.300" cy="624.700" rx="33.300" ry="15.700" />
      <ellipse cx="649" cy="679.500" rx="33.300" ry="15.700" />
      <Hole />
      <Hole x={408.5} y={145.3} />
    </g>
    <path d="M924 324h1v1h-1zM924 334h1v1h-1zM924 480h1v1h-1zM1333 625h1v1h-1zM586 625h1v1h-1z" fill="#46608a" />
    <path d="M1333.300 468v22M1323.500 475.500l20 7M1326 484l15-9.500" stroke="#f4f43c" strokeWidth="1.500" />
    <Axes x={446.500} y={193.500} colors={["#14149a", "#128a1e", "#a31a22"]} labels={["#1414f0", "#22ee33", "#d01818"]} />
    <text x="447" y="204.500" fill="#fff" textAnchor="middle" fontSize="11" fontWeight="bold" fontFamily="Liberation Sans, sans-serif">K</text>
    <Axes x={916.500} y={530.500} colors={["#0f9a20", "#0f8a20", "#0f9a20"]} labels={["#22ee33", "#22ee33", "#22ee33"]} />
  </svg>
);

interface option {
  text: string;
  disabled?: boolean;
  hover?: boolean;
}

const options: option[][] = [
  [{ text: "Dodaj punkty..." }, { text: "Odznacz wszystkie" }, { text: "Opcje sortowania..." }, { text: "Odwrotnie", hover: true }],
  [{ text: "Usuń punkty..." }],
  [{ text: "Rozwiń wszystko", disabled: true }, { text: "Zwiń wszystko", disabled: true }, { text: "Model eksploduje", disabled: true }],
  [{ text: "Odznacz 1" }, { text: "Zmień w punkcie...", disabled: true }],
  [{ text: "Zmień nazwę" }],
];

const ContextMenu = () => (
  <div role="menu" className="absolute top-[55px] left-16 w-[191px] border border-[#979797] bg-[#f0f0f0] p-0.5 text-[11px] text-black shadow-[3px_3px_3px_rgba(0,0,0,0.55)]">
    <div className="absolute inset-y-0.5 left-7 w-0.5 border-r border-white bg-[#dedede]" />
    {options.map((group, i) => (
      <div key={i} className="relative">
        {i > 0 && <div className="my-[3px] ml-7 h-0.5 border-b border-white bg-[#dcdcdc]" />}
        {group.map((option) => (
          <button
            key={option.text}
            role="menuitem"
            disabled={option.disabled}
            className={`block h-[22px] w-full rounded-[3px] border pl-[31px] text-left leading-5 ${
              option.hover ? "border-[#b5cdea] bg-linear-to-b from-[#f0f2f5] to-[#e6edf6]" : "border-transparent"
            } ${option.disabled ? "text-[#7c7c7c]" : ""}`}
          >
            {option.text}
          </button>
        ))}
      </div>
    ))}
  </div>
);

const winButton = "rounded-[3px] border border-[#707070] bg-linear-to-b from-[#f3f3f3] from-50% to-[#d8d8d8] to-50%";

const Dialog = () => (
  <div
    role="dialog"
    aria-label="Menadżer punktów wiercenia"
    className="absolute top-[69px] left-[53px] flex h-[336px] w-[282px] flex-col rounded-[7px] border-2 border-[#2b2f33] bg-linear-to-b from-[#dcd9cf] via-[#d3cfc3] via-30% to-[#bfb7a3] to-40% px-[5px] pb-[5px] shadow-[2px_3px_14px_4px_rgba(20,35,60,0.75)]"
  >
    <div className="flex h-[26px] shrink-0 items-center gap-1.5 text-[11px] text-[#1c1c1c]">
      <svg viewBox="0 0 16 14" className="h-3.5 w-4" aria-hidden="true">
        <path d="M.5.500h15v13H.5z" fill="#f4f6f8" stroke="#98a0a8" />
        <path d="M2 3h5v9H2z" fill="#3f7f80" />
        <path d="M9 3h5v9H9z" fill="#d5dbe0" />
      </svg>
      <h3 className="grow">Menadżer punktów wiercenia</h3>
      <button
        aria-label="Zamknij"
        className="flex h-[19px] w-[47px] items-center justify-center self-start rounded-b-[4px] border border-t-0 border-[#5c1a14] bg-linear-to-b from-[#dc9388] from-45% to-[#b8321f] to-50%"
      >
        <svg viewBox="0 0 12 10" className="h-2.5 w-3" aria-hidden="true">
          <path d="M1 1h3l2 2.500L8 1h3L8 5l3 4H8L6 6.500 4 9H1l3-4z" fill="#fff" stroke="#5a3a38" />
        </svg>
      </button>
    </div>
    <div className="flex grow flex-col border border-[#5a5a5a] bg-[#f0f0f0] px-2 pt-3">
      <div className="flex items-start justify-between pr-[19px]">
        <div className="mt-[3px] flex h-[167px] w-[176px] flex-col border border-[#828790] bg-white pt-px pl-[3px]">
          <div className="flex items-center gap-[3px]">
            <svg viewBox="0 0 16 16" className="size-4" aria-hidden="true">
              <path d="M0 0h16v16H0z" fill="#000" />
              <path d="M8 1v14M1 8h14" stroke="#ddd" strokeWidth="2" />
            </svg>
            <span className="bg-[#3399ff] px-0.5 font-['Liberation_Sans',sans-serif] text-xs leading-4 text-white">Punkt 1</span>
          </div>
          <Icon name="listArrow" />
        </div>
        <button aria-label="Wybierz" className={`flex h-6 w-[43px] items-start justify-center pt-1 ${winButton}`}>
          <svg viewBox="0 0 9 14" className="h-3.5 w-[9px]"><path d="M.5 1v10l2.500-2 1.500 4 2-1L5 8.500h3.500z" fill="#fff" stroke="#000" /></svg>
        </button>
      </div>
      <p className="mt-4 pl-2 font-['Liberation_Sans',sans-serif] text-[11px] leading-4 text-black">Stan sort</p>
      <button className={`mt-2.5 ml-2 h-6 w-24 pl-4 text-left font-['Liberation_Sans',sans-serif] text-[11px] text-black ${winButton}`}>Poso</button>
      <button aria-label="OK" className={`mt-4 h-7 w-10 self-end ${winButton}`} />
    </div>
    <ContextMenu />
  </div>
);

const View = () => (
  <main className="relative mt-px grow overflow-hidden bg-[#7da7d3]">
    <Wireframe />
    <Dialog />
    <svg viewBox="0 0 250 130" className="pointer-events-none absolute top-[100px] left-[50px] h-[130px] w-[250px]" aria-hidden="true">
      <g fill="none" stroke="#e31b23" strokeWidth="5">
        <ellipse cx="53" cy="23" rx="46" ry="17.500" />
        <ellipse cx="132" cy="106" rx="60" ry="15" />
      </g>
    </svg>
  </main>
);

const App = () => {
  return (
    <div className="flex h-screen flex-col overflow-hidden bg-[#f0f0f0] font-['Noto_Sans',sans-serif]">
      <Header />
      <div className="relative flex min-h-0 grow">
        <aside className="flex w-[77px] shrink-0 justify-between pt-px pr-0.5 pl-px">
          <Bar vertical items=": a1 a2 a3 | a4 a5 a6 a7 a8 | a9 a10 | a11 a12 a13 a14 | a15 a16 a17 a18 | a19 a20 a21 a22" />
          <Bar vertical items=": b1 b2 b3 b4 b5 | b6 b7 b8 : b9 b10 b11 b12 b13 b14 b15 b16 b17 b18 b19 b20 b21 b22 b23" />
          <Bar vertical items=": c1 c2 c3 c4 | c5 c6 c7 c8 | c9 c10 | c11 c12 c13 c14 : c15 c16 c17 c18 c19 b23" />
        </aside>
        <div className="flex min-w-0 grow border-t-[3px] border-[#e4e4e4]">
          <Operations />
          <View />
        </div>
        <svg viewBox="0 0 170 56" className="pointer-events-none absolute top-[333px] left-[142px] h-14 w-[170px]" aria-hidden="true">
          <ellipse cx="84.500" cy="28" rx="78" ry="22" fill="none" stroke="#e31b23" strokeWidth="5" />
        </svg>
      </div>
    </div>
  );
};

export default App;
